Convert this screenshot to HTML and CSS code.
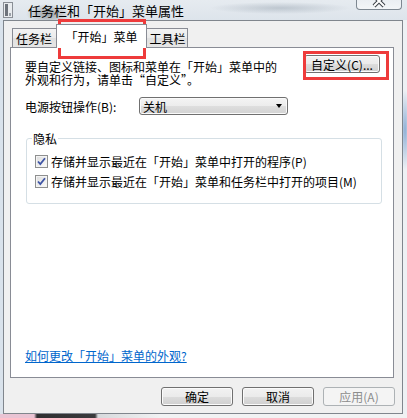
FILE: index.html
```html
<!DOCTYPE html>
<html lang="zh-CN">
  <head>
    <meta charset="UTF-8" />
    <title>任务栏和「开始」菜单属性</title>
    <link rel="stylesheet" href="styles.css">
  </head>
  <body>
    <div class="window">
      <div class="titlebar">
        <svg class="app-icon" width="10" height="16" viewBox="0 0 10 16">
          <rect x="0.5" y="0.5" width="9" height="15" fill="#e9ecef" stroke="#8a8f96" />
          <rect x="2" y="2" width="3" height="12" fill="#6d737b" />
          <rect x="6" y="11" width="2" height="3" fill="#9aa1a9" />
        </svg>
        <span class="title">任务栏和「开始」菜单属性</span>
        <div class="close-btn">
          <svg width="16" height="10" viewBox="0 0 16 10">
            <path d="M3 -4 L8 1 L13 -4 M3 6 L8 1 L13 6" fill="none" stroke="#3c4148" stroke-width="4" />
            <path d="M3 -4 L8 1 L13 -4 M3 6 L8 1 L13 6" fill="none" stroke="#ffffff" stroke-width="2" />
          </svg>
        </div>
      </div>

      <div class="dialog">
        <div class="tabs">
          <div class="tab tab-taskbar">任务栏</div>
          <div class="tab tab-start active">「开始」菜单</div>
          <div class="tab tab-toolbar">工具栏</div>
        </div>

        <div class="panel">
          <div class="intro">
            <div class="intro-text">
              <p>要自定义链接、图标和菜单在「开始」菜单中的</p>
              <p>外观和行为，请单击“自定义”。</p>
            </div>
            <button class="btn btn-customize">自定义(C)...</button>
          </div>

          <div class="power-row">
            <span class="power-label">电源按钮操作(B):</span>
            <div class="combo">
              <span>关机</span>
              <span class="combo-arrow"></span>
            </div>
          </div>

          <fieldset class="group">
            <legend>隐私</legend>
            <label class="check-row">
              <span class="checkbox">
                <svg width="11" height="11" viewBox="0 0 11 11">
                  <path d="M2 5.5 L4.3 8 L9 2.2" fill="none" stroke="#3f55a5" stroke-width="1.8" />
                </svg>
              </span>
              存储并显示最近在「开始」菜单中打开的程序(P)
            </label>
            <label class="check-row">
              <span class="checkbox">
                <svg width="11" height="11" viewBox="0 0 11 11">
                  <path d="M2 5.5 L4.3 8 L9 2.2" fill="none" stroke="#3f55a5" stroke-width="1.8" />
                </svg>
              </span>
              存储并显示最近在「开始」菜单和任务栏中打开的项目(M)
            </label>
          </fieldset>

          <a class="help-link" href="#">如何更改「开始」菜单的外观?</a>
        </div>

        <div class="actions">
          <button class="btn">确定</button>
          <button class="btn">取消</button>
          <button class="btn" disabled>应用(A)</button>
        </div>
      </div>

      <div class="taskbar-strip"></div>

      <!-- annotation boxes -->
      <div class="highlight highlight-tab"></div>
      <div class="highlight highlight-btn"></div>
    </div>
  </body>
</html>
```

FILE: styles.css
```css
body {
  margin: 0;
  font-family: "Noto Sans CJK SC", "Liberation Sans", sans-serif;
  font-size: 12px;
  color: #000;
}

.window {
  position: relative;
  width: 407px;
  height: 418px;
  overflow: hidden;
  display: flex;
  flex-direction: column;
  background:
    radial-gradient(ellipse 6px 40px at 405px 130px, #8fb0d6, transparent),
    linear-gradient(to right, #d9e2eb, #e8edf2 40%, #eef1f4);
}

.titlebar {
  height: 20px;
  display: flex;
  align-items: center;
  padding-left: 3px;
  background:
    radial-gradient(ellipse 22px 10px at 48px 14px, rgba(70, 70, 70, 0.45), transparent),
    radial-gradient(ellipse 70px 6px at 280px 8px, rgba(120, 135, 150, 0.35), transparent),
    linear-gradient(#e6ebf0, #dde4eb);
}

.app-icon {
  flex: none;
}

.title {
  margin-left: 15px;
  font-size: 13px;
  line-height: 15px;
}

.close-btn {
  margin-left: auto;
  margin-right: 5px;
  align-self: flex-start;
  width: 44px;
  height: 9px;
  border: 1px solid #7d8791;
  border-top: none;
  border-radius: 0 0 4px 4px;
  background: linear-gradient(rgba(255, 255, 255, 0.2), rgba(255, 255, 255, 0.6));
  display: flex;
  justify-content: center;
}

.dialog {
  box-sizing: border-box;
  width: 400px;
  height: 394px;
  margin-left: 3px;
  background: #f0f0f0;
  border: 1px solid #80868d;
  display: flex;
  flex-direction: column;
}

/* tabs */
.tabs {
  height: 26px;
  padding-left: 8px;
  display: flex;
  align-items: flex-end;
}

.tab {
  box-sizing: border-box;
  height: 19px;
  padding-top: 1px;
  border: 1px solid #898c95;
  border-bottom: none;
  background: linear-gradient(#f3f3f3, #ebebeb 50%, #e0e0e0 50%, #e6e6e6);
  display: flex;
  align-items: center;
  justify-content: center;
  line-height: 13px;
}

.tab-taskbar {
  width: 46px;
  padding-right: 2px;
}

.tab-toolbar {
  width: 43px;
  padding-left: 2px;
}

.tab-start {
  width: 91px;
}

.tab.active {
  position: relative;
  z-index: 1;
  height: 24px;
  padding: 0;
  margin: 0 -2px -1px;
  background: #fff;
}

/* panel */
.panel {
  box-sizing: border-box;
  height: 331px;
  margin: 0 8px 0 6px;
  background: #fff;
  border: 1px solid #898c95;
  display: flex;
  flex-direction: column;
}

.intro {
  display: flex;
  justify-content: space-between;
  align-items: flex-start;
  padding: 7px 13px 0 14px;
}

.intro-text {
  margin-top: 5px;
}

.intro-text p {
  margin: 0;
  line-height: 13px;
}

.btn {
  box-sizing: border-box;
  width: 72px;
  height: 19px;
  padding: 0;
  font-family: inherit;
  font-size: 12px;
  line-height: 13px;
  color: #000;
  border: 1px solid #707070;
  border-radius: 3px;
  background: linear-gradient(#f2f2f2, #ebebeb 50%, #dddddd 50%, #cfcfcf);
  box-shadow: inset 0 0 0 1px #fbfbfb;
}

.btn:disabled {
  color: #8d8d8d;
  border-color: #adb2b5;
  background: #f4f4f4;
  box-shadow: none;
}

.btn-customize {
  width: 76px;
  height: 18px;
}

.power-row {
  display: flex;
  align-items: center;
  margin: 11px 0 0 14px;
}

.power-label {
  width: 114px;
  line-height: 13px;
}

.combo {
  box-sizing: border-box;
  width: 149px;
  height: 18px;
  padding: 0 5px 0 3px;
  border: 1px solid #707070;
  border-radius: 3px;
  background: linear-gradient(#f4f4f4, #ececec 50%, #dedede 50%, #d3d3d3);
  box-shadow: inset 0 0 0 1px #fafafa;
  display: flex;
  align-items: center;
  justify-content: space-between;
  line-height: 13px;
}

.combo-arrow {
  width: 0;
  height: 0;
  border-top: 4px solid #000;
  border-left: 3.5px solid transparent;
  border-right: 3.5px solid transparent;
}

/* privacy group */
.group {
  margin: 17px 11px 0 15px;
  padding: 10px 0 15px 8px;
  border: 1px solid #d5dfe5;
  border-radius: 3px;
  display: flex;
  flex-direction: column;
  gap: 7px;
}

.group legend {
  margin-left: -3px;
  padding: 0 1px;
  line-height: 13px;
}

.check-row {
  display: flex;
  align-items: center;
  gap: 3px;
  height: 13px;
  line-height: 13px;
}

.checkbox {
  box-sizing: border-box;
  width: 13px;
  height: 13px;
  border: 1px solid #8e8f8f;
  background: linear-gradient(135deg, #dcdcdc, #fbfbfb);
  box-shadow: inset 0 0 0 1px #f4f4f4;
  display: flex;
  align-items: center;
  justify-content: center;
}

.help-link {
  margin: auto 0 15px 14px;
  color: #0066cc;
  line-height: 13px;
}

/* dialog buttons */
.actions {
  display: flex;
  justify-content: flex-end;
  gap: 9px;
  padding: 9px 7px 0 0;
}

.taskbar-strip {
  flex: 1;
  background: linear-gradient(to right, #e9c3d3 0, #e9c3d3 34px, #2f2f31 37px, #3a3a3c 95px, #d7d9dc 98px, #f1f2f3 160px);
}

/* red annotation boxes drawn over the screenshot */
.highlight {
  position: absolute;
  box-sizing: border-box;
  border: 3px solid #ee3b3b;
}

.highlight-tab {
  left: 58px;
  top: 19px;
  width: 88px;
  height: 40px;
}

.highlight-btn {
  left: 303px;
  top: 51px;
  width: 86px;
  height: 29px;
}
```
